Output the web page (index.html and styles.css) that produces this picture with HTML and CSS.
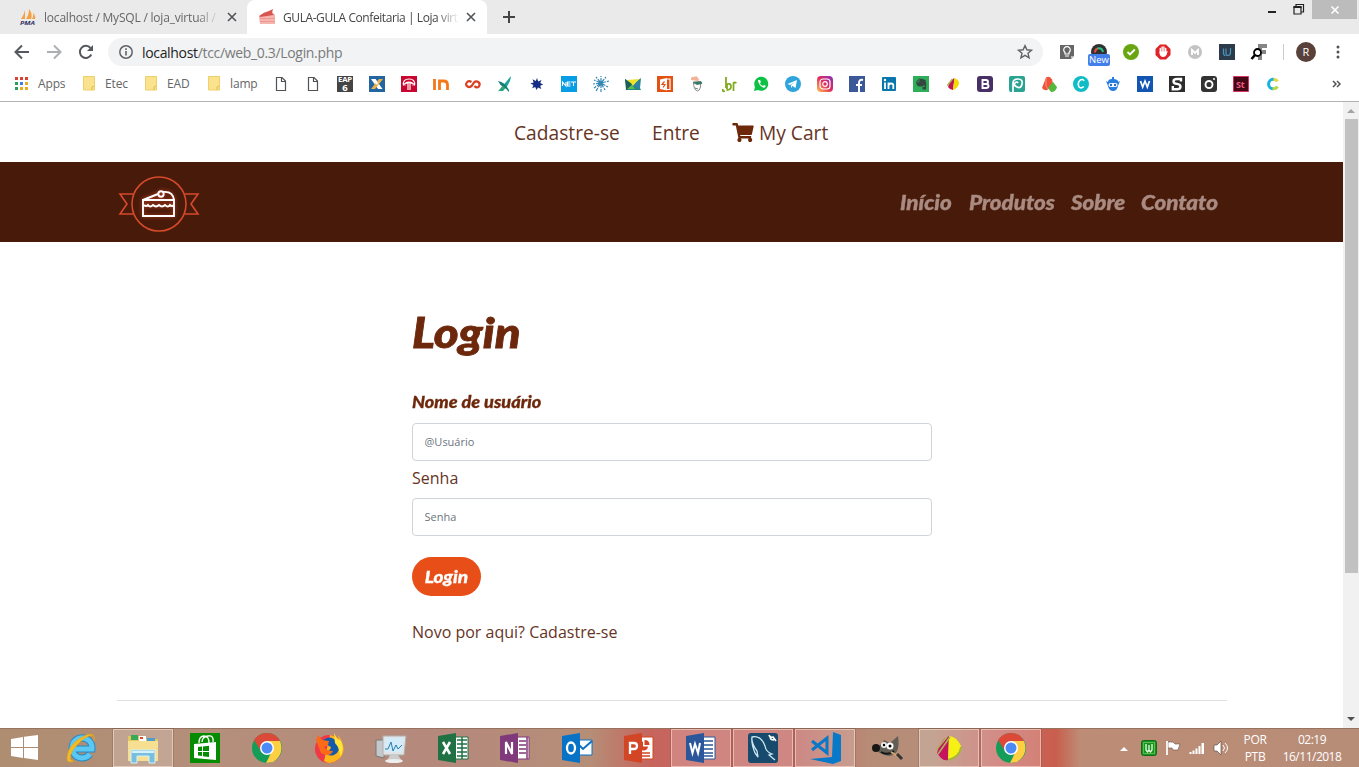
FILE: index.html
```html
<!DOCTYPE html>
<html lang="pt-BR">
<head>
<meta charset="utf-8">
<title>GULA-GULA Confeitaria | Loja virtual</title>
<link rel="stylesheet" href="styles.css">
</head>
<body>
<div class="screen">
  <header class="tabstrip">
    <div class="tab tab-idle">
      <svg class="fav" viewBox="0 0 16 16"><path d="M5 1v9H1Q4 6 5 1zM9 0q4 5 2 10H6Q9 6 9 0zM13 4q3 3 2 6h-3q2-3 1-6z" fill="#f4a043"/><text x="0" y="15.500" class="pma" textLength="15" lengthAdjust="spacingAndGlyphs">PMA</text></svg>
      <span class="tab-title title-one">localhost / MySQL / loja_virtual /</span>
      <svg class="close" viewBox="0 0 10 10"><path d="M1 1l8 8M9 1L1 9"/></svg>
    </div>
    <div class="tab tab-active">
      <svg class="fav" viewBox="0 0 16 16"><path d="M0 8L12 2l4 4v9H1z" fill="#f5b5ae"/><path d="M0 7Q5 3 10 2l4-2-1 4 2 2L1 8z" fill="#d85650"/><path d="M1 9.500h15M1 12.500h15" stroke="#ee9a93"/></svg>
      <span class="tab-title title-two">GULA-GULA Confeitaria | Loja virt</span>
      <svg class="close" viewBox="0 0 10 10"><path d="M1 1l8 8M9 1L1 9"/></svg>
    </div>
    <svg class="newtab" viewBox="0 0 12 12"><path d="M6 0v12M0 6h12"/></svg>
    <div class="winbtns">
      <svg class="min" viewBox="0 0 8 2"><path d="M0 0h8v2H0z" fill="#222"/></svg>
      <svg class="restore" viewBox="0 0 11 11"><path d="M1 3h7v7H1zM3 3V.5h7.5V8H8" fill="none" stroke="#222" stroke-width="1.2"/><path d="M.5 3h8" stroke="#222" stroke-width="2"/></svg>
      <div class="winclose"><svg viewBox="0 0 8 8"><path d="M.5.5l7 7m0-7l-7 7" stroke="#fff" stroke-width="1.6"/></svg></div>
    </div>
  </header>

  <div class="toolbar">
    <svg class="nav-ic" viewBox="0 0 16 16"><path d="M15 8H2M8 1.500L1.500 8 8 14.500" class="ln"/></svg>
    <svg class="nav-ic dim" viewBox="0 0 16 16"><path d="M1 8h13M8 1.500L14.500 8 8 14.500" class="ln"/></svg>
    <svg class="nav-ic" viewBox="0 0 16 16"><path d="M13.300 10.500A6 6 0 1 1 12.500 4" class="ln"/><path d="M15 1v6H9z" fill="#55585c"/></svg>
    <div class="omnibox">
      <svg class="info" viewBox="0 0 14 14"><circle cx="7" cy="7" r="6.200" fill="none" stroke="#5f6368" stroke-width="1.500"/><path d="M7 6v4.500M7 3.300V5" stroke="#5f6368" stroke-width="1.600"/></svg>
      <span class="url"><b>localhost</b>/tcc/web_0.3/Login.php</span>
      <svg class="star" viewBox="0 0 16 16"><path d="M8 1.600l1.900 4.200 4.600.4-3.500 3.100 1.100 4.500L8 11.400l-4.100 2.400L5 9.300 1.500 6.200l4.600-.4z" fill="none" stroke="#5f6368" stroke-width="1.400"/></svg>
    </div>
    <div class="exts">
      <svg viewBox="0 0 16 16"><path d="M1 1h14v11l-3 3H1z" fill="#666"/><path d="M15 12l-3 3v-3z" fill="#bbb"/><path d="M6 10V8.500a3.300 3.300 0 1 1 4 0V10zM6 12h4" fill="none" stroke="#fff" stroke-width="1.200"/></svg>
      <div class="new-ext"><svg viewBox="0 0 16 16"><circle cx="8" cy="8" r="8" fill="#2f3133"/><path d="M4 8.500Q4 5 7 4.500" fill="none" stroke="#e64c3c" stroke-width="2"/><path d="M6.500 4.500Q11 3.500 12 8" fill="none" stroke="#27c486" stroke-width="2"/></svg><span>New</span></div>
      <svg viewBox="0 0 16 16"><circle cx="8" cy="8" r="8" fill="#68a611"/><path d="M4.500 8L7 10.500l4.800-5" fill="none" stroke="#fff" stroke-width="1.900"/></svg>
      <svg viewBox="0 0 16 16"><path d="M5 .500h6L15.500 5v6L11 15.500H5L.500 11V5z" fill="#df2329"/><path d="M5.300 9V4.500M7.100 8V3M8.900 8V3M10.700 9V4.500" stroke="#fff" stroke-width="1.400" stroke-linecap="round"/><path d="M4.600 7.500h6.800l1.400-.8-1.300 4.300q-1 2-3.500 2t-3.400-3z" fill="#fff"/></svg>
      <svg viewBox="0 0 16 16"><circle cx="8" cy="8" r="7" fill="#c3c3c3"/><path d="M5 11V6l3 3 3-3v5" fill="none" stroke="#fff" stroke-width="1.800"/></svg>
      <svg viewBox="0 0 16 16"><path d="M0 0h16v16H0z" fill="#2b3b4c"/><path d="M4.500 4.500v4.500q0 2.500 2 2.500M7 4.500V9q0 2.500 2 2.500 2.500 0 2.500-3V4" fill="none" stroke="#4d94b8" stroke-width="1.200"/></svg>
      <svg viewBox="0 0 16 16"><path d="M7 0h9v4h-5v2h4v4h-4v6H7z" fill="#858585"/><circle cx="6.500" cy="8.500" r="3.500" fill="#fff" stroke="#000" stroke-width="1.800"/><path d="M4 11l-3.500 4" stroke="#000" stroke-width="2.600"/></svg>
    </div>
    <i class="tool-sep"></i>
    <span class="avatar">R</span>
    <svg class="dots" viewBox="0 0 4 14"><circle cx="2" cy="2" r="1.500"/><circle cx="2" cy="7" r="1.500"/><circle cx="2" cy="12" r="1.500"/></svg>
  </div>

  <nav class="bookmarks">
    <svg class="apps" viewBox="0 0 13 13"><path d="M0 0h3v3H0zM5 0h3v3H5zM10 0h3v3h-3z" fill="#d84335"/><path d="M0 5h3v3H0z" fill="#2a9d58"/><path d="M5 5h3v3H5z" fill="#3b7de8"/><path d="M10 5h3v3h-3zM5 10h3v3H5zM10 10h3v3h-3z" fill="#e5ad22"/><path d="M0 10h3v3H0z" fill="#2a9d58"/></svg>
    <span class="bm w-apps">Apps</span>
    <svg class="folder" viewBox="0 0 12 15"><path d="M.500.500h11V14H.500z" fill="#fbe38e" stroke="#edcf6d"/><path d="M9 14v-3l2-1" fill="none" stroke="#dfbb4d"/></svg>
    <span class="bm w-etec">Etec</span>
    <svg class="folder" viewBox="0 0 12 15"><path d="M.500.500h11V14H.500z" fill="#fbe38e" stroke="#edcf6d"/><path d="M9 14v-3l2-1" fill="none" stroke="#dfbb4d"/></svg>
    <span class="bm w-ead">EAD</span>
    <svg class="folder" viewBox="0 0 12 15"><path d="M.500.500h11V14H.500z" fill="#fbe38e" stroke="#edcf6d"/><path d="M9 14v-3l2-1" fill="none" stroke="#dfbb4d"/></svg>
    <span class="bm w-lamp">lamp</span>
    <div class="bm-icons">
      <svg viewBox="0 0 16 16"><path d="M3.500 1.500H9L12.500 5v9.500h-9zM8.500 1.500v4h4" fill="none" stroke="#505356" stroke-width="1.200"/></svg>
      <svg viewBox="0 0 16 16"><path d="M3.500 1.500H9L12.500 5v9.500h-9zM8.500 1.500v4h4" fill="none" stroke="#505356" stroke-width="1.200"/></svg>
      <svg viewBox="0 0 16 16"><path d="M0 0h16v16H0z" fill="#444"/><text x="1" y="6" class="t-eap" textLength="14" lengthAdjust="spacingAndGlyphs">EAP</text><text x="5.200" y="14.500" class="t-six">6</text></svg>
      <svg viewBox="0 0 16 16"><path d="M0 0h16v16H0z" fill="#2365a0"/><path d="M2 3h4.500l7 10H9z" fill="#fff"/><path d="M10 3h4L6 13H2z" fill="#edb04a"/><path d="M6 3l3 4-1 2-5-6z" fill="#fff"/></svg>
      <svg viewBox="0 0 16 16"><path d="M0 0h16v16H0z" fill="#c9062f"/><path d="M2.500 9.500Q1.500 3 8 3t5.500 6.500M4 9.500q-.500-3.500 4-3.500t4 3.500M3 8q5-2 10 0M7 7v7M9 7v7" fill="none" stroke="#fff" stroke-width="1.200"/></svg>
      <svg viewBox="0 0 16 16"><path d="M1.500 3v11M6.500 14V5h4q4 0 4 4v5" fill="none" stroke="#f27818" stroke-width="2.800"/></svg>
      <svg viewBox="0 0 16 16"><path d="M6.500 6Q3.500 4 1.800 6.500t.700 4q2.500 1.500 4.500-1l2-3q2-2 4.300-.500t.700 4.500q-2.500 2-4.500-.500" fill="none" stroke="#dd3e20" stroke-width="2.200"/></svg>
      <svg viewBox="0 0 16 16"><path d="M14 0Q14 7 6 15H1.500Q8 7 14 0z" fill="#1ca49c"/><path d="M1 5q7 1 11 9v2Q9 12 6 11 3 9 1 5z" fill="#13807a"/><path d="M1 15.500l5-6 2 3z" fill="#35a56b"/></svg>
      <svg viewBox="0 0 16 16"><path d="M8 2l1.200 3.500L12.500 4l-1.300 3 3 1.500-3 1.300 1 3.200-3.200-1.500L7.500 14l-1.300-3-3 1.300 1.200-3.300-3-1.500 3.200-1-1-3.300L6.800 5z" fill="#152e83"/></svg>
      <svg viewBox="0 0 16 16"><path d="M0 0h16v16H0z" fill="#079de5"/><path d="M1.500 10V6L5 10V6M9.500 6h-3v4h3M6.500 8h3M10 6h5M12.500 6v4" fill="none" stroke="#fff" stroke-width="1.100"/></svg>
      <svg viewBox="0 0 16 16"><path d="M8 7L3 1M8 7V0M8 7l5-6M8 7l8-2M8 7L1 4M8 7L0 8M8 7l-7 5M8 7l-5 8M8 7v9M8 7l4 7M8 7l7 4" stroke="#3487b4" stroke-width="1.200" stroke-dasharray="5 1"/></svg>
      <svg viewBox="0 0 16 16"><path d="M0 3l8 5 8-6-1 10 1 2H2z" fill="#26877e"/><path d="M2 4l12-1-6 7z" fill="#f0e229"/><path d="M0 3l7 5-5 6H1z" fill="#1b6055"/><path d="M8 10l6-6 1 9z" fill="#2e83ad"/><path d="M2 13l5-4 3 4z" fill="#58bb56"/></svg>
      <svg viewBox="0 0 16 16"><path d="M0 0h16v16H0z" fill="#e35212"/><path d="M3 3.500L10 2v12.500L3 13z" fill="#fff"/><path d="M10 3h3v10.500h-3" fill="none" stroke="#fff" stroke-width="1.200"/><path d="M7.500 5.500L5 8.500h3L6 11.500" fill="none" stroke="#e35212" stroke-width="1.200"/></svg>
      <svg viewBox="0 0 16 16"><path d="M2 4Q2 0 5 1q3-2 4 1 2 2 0 3z" fill="#f2b399"/><path d="M4.500 6h7v5q-1 4-3 4-4-1-4-9z" fill="#fff" stroke="#857a70" stroke-width=".9"/><path d="M4 6.500l8-1 1 2-5 1zM6 12l3 1" fill="#397769" stroke="#397769" stroke-width=".8"/></svg>
      <svg viewBox="0 0 16 16"><path d="M5 1v11M2 13q-1 3 2 2M6 13V8q4-1 4 2.500T5.500 14M12.500 15V7q1-1 3 0" fill="none" stroke="#82ab21" stroke-width="1.800"/></svg>
      <svg viewBox="0 0 16 16"><path d="M1 15l1-4A7 7 0 1 1 5 14z" fill="#0cc143"/><path d="M5 4q0 5 6 8l2-2-2-1-1 1q-3-1-3-3l1-1-1-2z" fill="#fff"/></svg>
      <svg viewBox="0 0 16 16"><circle cx="8" cy="8" r="8" fill="#2fa4dc"/><path d="M2.500 8L12 4l-1.500 8-3-2-1.500 2V9l4-3-5 3z" fill="#fff"/></svg>
      <svg viewBox="0 0 16 16"><defs><linearGradient id="insta" x2="1" y2="0" y1="1"><stop stop-color="#ffc64d"/><stop offset=".5" stop-color="#e32b5d"/><stop offset="1" stop-color="#8530c4"/></linearGradient></defs><rect width="16" height="16" rx="4" fill="url(#insta)"/><rect x="3" y="3" width="10" height="10" rx="3" fill="none" stroke="#fff" stroke-width="1.200"/><circle cx="8" cy="8" r="2.300" fill="none" stroke="#fff" stroke-width="1.200"/></svg>
      <svg viewBox="0 0 16 16"><path d="M0 0h16v16H0z" fill="#3b5999"/><path d="M14 4q-4-1-4 3v9M7 9h6" fill="none" stroke="#fff" stroke-width="2"/></svg>
      <svg viewBox="0 0 16 16"><rect x="1" y="1" width="14" height="14" rx="1" fill="#0877ae"/><path d="M4 6.500V13M7.500 6.500V13M7.500 10q0-2.500 2.500-2.500t2.300 2V13" fill="none" stroke="#fff" stroke-width="1.800"/><circle cx="4" cy="4" r="1.200" fill="#fff"/></svg>
      <svg viewBox="0 0 16 16"><path d="M0 0h16v16H0z" fill="#2dae59"/><path d="M3 6l3-3.500q4 0 6.500 1.500Q14 8 13 13.500H9.500V11h2V9q-2 2-4 1.500Q3.500 11 3 6z" fill="#354640"/><path d="M3.500 6H6V3" fill="none" stroke="#2dae59" stroke-width=".7"/></svg>
      <svg viewBox="0 0 16 16"><path d="M3 11Q5 4 9.500 2L8 14q-3 0-5-3z" fill="#bd1754"/><path d="M9.500 2q5 2 4.500 6-2 5-6 6z" fill="#f4dc00"/><path d="M2.300 9.500L7.500 3" stroke="#a9b755" stroke-width="1.500"/></svg>
      <svg viewBox="0 0 16 16"><rect width="16" height="16" rx="3" fill="#483067"/><path d="M5.500 4h3.300q2.200 0 2.200 2T8.800 8q2.700 0 2.700 2T9 12H5.500zM5.500 8h3.300" fill="none" stroke="#fff" stroke-width="1.900"/></svg>
      <svg viewBox="0 0 16 16"><rect width="16" height="16" rx="2" fill="#2aa392"/><path d="M4 16V7q0-4 5-4t4 5-5 3-2-4 3 0" fill="none" stroke="#fff" stroke-width="1.700"/></svg>
      <svg viewBox="0 0 16 16"><path d="M1 12L5 1.500q4-2 6 2l1 4-5 6q-3 2-6-1.500z" fill="#ee543a"/><path d="M7 12l5-6 4 5q-1 5-6 5z" fill="#56b73e"/><path d="M5 2v8l2 3" fill="none" stroke="#ff9078"/></svg>
      <svg viewBox="0 0 16 16"><circle cx="8" cy="8" r="8" fill="#10bdc6"/><path d="M11 5q-1-2.500-3.700-1Q4 7 6 11q2 2 4.800-.500" fill="none" stroke="#fff" stroke-width="1.600"/></svg>
      <svg viewBox="0 0 16 16"><path d="M7 3V1h2v2q5 1 4 3l2-1-2 5q-1 5-5 5t-5-5L1 5l2 1q0-3 4-3z" fill="#287de1"/><rect x="3.500" y="7" width="9" height="4" rx="2" fill="#fff"/><circle cx="6" cy="9" r="1.200" fill="#246bd0"/><circle cx="10" cy="9" r="1.200" fill="#246bd0"/></svg>
      <svg viewBox="0 0 16 16"><path d="M0 0h16v16H0z" fill="#1255b2"/><path d="M3.500 5L5.700 11 8 5l2.300 6 2.200-6" fill="none" stroke="#fff" stroke-width="1.700"/></svg>
      <svg viewBox="0 0 16 16"><path d="M0 0h16v16H0z" fill="#2d2d2d"/><path d="M12 5.500V3H8Q4.500 3 4.500 5.300t3.500 2.600 3.500 2.800-3.500 2.500H3.800V10" fill="none" stroke="#fff" stroke-width="2.400"/></svg>
      <svg viewBox="0 0 16 16"><rect width="16" height="16" rx="3" fill="#333"/><circle cx="8" cy="8.500" r="3.500" fill="none" stroke="#fff" stroke-width="1.900"/><circle cx="13" cy="3" r="1" fill="#fff"/></svg>
      <svg viewBox="0 0 16 16"><path d="M.500.500h15v15H.500z" fill="#440817" stroke="#db315f"/><text x="3" y="11.500" class="t-st">St</text></svg>
      <svg viewBox="0 0 16 16"><path d="M12.500 5.500Q11 3.300 8 3.300" fill="none" stroke="#e3da43" stroke-width="3"/><path d="M8.500 3.300a4.700 4.700 0 0 0-.500 9.400" fill="none" stroke="#17b2df" stroke-width="3"/><path d="M7.500 12.700q3.500.300 5-2.200" fill="none" stroke="#b5d943" stroke-width="3"/></svg>
    </div>
    <svg class="more" viewBox="0 0 9 8"><path d="M1 1l3 3-3 3M5 1l3 3-3 3" fill="none" stroke="#555" stroke-width="1.500"/></svg>
  </nav>

  <main class="viewport">
    <div class="site">
      <div class="topnav">
        <a class="t-cad">Cadastre-se</a><a class="t-ent">Entre</a>
        <a class="cart"><svg viewBox="0 0 576 512"><path fill="#6d280c" d="M528.100 301.300l47.300-208C578.800 78.300 567.400 64 552 64H159.200l-9.200-44.800C147.800 8 137.900 0 126.500 0H24C10.700 0 0 10.700 0 24v16c0 13.300 10.700 24 24 24h69.900l70.200 343.400C147.300 417.100 136 435.200 136 456c0 30.900 25.100 56 56 56s56-25.100 56-56c0-15.700-6.400-29.800-16.800-40h209.600C430.400 426.200 424 440.300 424 456c0 30.900 25.100 56 56 56s56-25.100 56-56c0-22.200-12.900-41.300-31.600-50.400l5.500-24.300c3.400-15-8-29.300-23.400-29.300H218.100l-6.500-32h293.100c11.200 0 20.900-7.800 23.400-18.700z"/></svg><span>My Cart</span></a>
      </div>
      <div class="brandbar">
        <svg class="logo" viewBox="0 0 82 58"><g fill="none" stroke="#d64a2b" stroke-width="1.600"><circle cx="41" cy="29" r="27"/><path d="M15 19H2l7 10-7 10h13M67 19h13l-7 10 7 10H67"/></g><g class="cake" fill="none" stroke="#fff" stroke-width="1.900"><path d="M25 41V25h31v16zM25 25l15-6M45 17q10-1 11 8M26 30q2 2 4 0 2 3 5 0 3 3 6 0 3 3 6 0 3 3 5 0 2 2 4 0"/><circle cx="43" cy="19" r="2.700"/></g></svg>
        <nav class="menu"><a class="m1"><span>Início</span></a><a class="m2"><span>Produtos</span></a><a class="m3"><span>Sobre</span></a><a class="m4"><span>Contato</span></a></nav>
      </div>
      <form class="login">
        <h1>Login</h1>
        <label class="user">Nome de usuário</label>
        <input type="text" placeholder="@Usuário">
        <label class="pass">Senha</label>
        <input type="password" placeholder="Senha">
        <button type="button"><span>Login</span></button>
        <p>Novo por aqui? Cadastre-se</p>
      </form>
      <hr>
    </div>
    <div class="scrollbar"><svg viewBox="0 0 8 4"><path d="M0 4l4-4 4 4z" fill="#a3a3a3"/></svg><i></i><svg class="down" viewBox="0 0 8 4"><path d="M0 0l4 4 4-4z" fill="#505050"/></svg></div>
  </main>

  <footer class="taskbar">
    <div class="start"><svg viewBox="0 0 28 28"><path d="M0 5l12-2v10H0zM13 2.800L27 1v12H13zM0 14h12v10L0 22zM13 14h14v12l-14-2z" fill="#fff"/></svg></div>
    <div class="tasks">
      <div class="task"><svg viewBox="0 0 32 32"><path d="M25 22A10 10 0 1 1 27 17H9" fill="none" stroke="#278ac5" stroke-width="7"/><path d="M25 22A10 10 0 1 1 27 17H9" fill="none" stroke="#5bc8f4" stroke-width="5"/><path d="M29 9Q31 0 21 3 3 11 2 26q0 6 7 3Q2 29 8 18 16 7 24 4q6-2 5 5z" fill="#f2bb23" stroke="#e3a51a" stroke-width=".6"/></svg></div>
      <div class="task open"><svg viewBox="0 0 32 32"><path d="M1 4h12l2 3h16v22H1z" fill="#e6c65f"/><path d="M4 3h7v5H4z" fill="#37a957"/><path d="M12 4h7v5h-7z" fill="#fff"/><path d="M13 5h3v2h-3z" fill="#dc4930"/><path d="M20 6h8v3h-8z" fill="#4e9dd1"/><path d="M1 9h30v20H1z" fill="#f6df91"/><path d="M4 31V18h24v13h-6v-7H10v7z" fill="#78bedf" stroke="#d5f2fb"/><path d="M5 20h22" stroke="#d5f2fb" stroke-width="2"/></svg></div>
      <div class="task"><svg viewBox="0 0 32 32"><path d="M1 1h30v30H1z" fill="#058b00"/><path d="M5 12l22-2v18L5 26z" fill="#fff"/><path d="M10 11q0-7 5-7t5 7M13 10q0-5 6-6t5 6" fill="none" stroke="#fff" stroke-width="1.300"/><path d="M9 15l4-.500V19H9zM14 14.400l6-.700V19h-6zM9 20h4v4l-4-.500zM14 20h6v5l-6-.800z" fill="#058b00"/></svg></div>
      <div class="task"><svg viewBox="0 0 32 32"><circle cx="16" cy="16" r="15" fill="#149d59"/><path d="M3 8Q8 1 16 1q9 0 13 8H16l-6 10z" fill="#dc4938"/><path d="M16 9h13q5 13-7 21l-7 1 6-12z" fill="#ffcf42"/><circle cx="16" cy="16" r="7" fill="#fff"/><circle cx="16" cy="16" r="5.500" fill="#4c8bf5"/></svg></div>
      <div class="task"><svg viewBox="0 0 32 32"><circle cx="16" cy="17" r="14" fill="#ef3947"/><path d="M17 3q6 1 9 6l-1-6q10 14 2 23-9 8-16 3z" fill="#ffb51b"/><path d="M10 8q8-6 14 2 5 9-3 13-7 2-9-4 5 1 6-4-3-1-5-4z" fill="#135baa"/><path d="M3 8l2-5 4 5 7 1-1 4-4 2q2 4 9 4-3 7-12 2z" fill="#fa6b18"/><path d="M21 1q2 5 7 8 4 8-1 16 0-9-5-14z" fill="#ffe43a"/></svg></div>
      <div class="task"><svg viewBox="0 0 32 32"><path d="M1 8h8v18l-8-2z" fill="#c4c8ca" stroke="#777"/><path d="M8 4h23l-2 19H8z" fill="#e2e3e4" stroke="#adb0b2"/><path d="M10 6h18l-1 14H10z" fill="#d4ecfa"/><path d="M10 17h3l3-7 2 9 3-6 2 4 4-4" fill="none" stroke="#267faa"/><path d="M15 23h8l4 6H12z" fill="#ccc"/><ellipse cx="19" cy="29" rx="9" ry="2" fill="#eee"/></svg></div>
      <div class="task"><svg viewBox="0 0 32 32"><path d="M18 5h13v22H18z" fill="#fff" stroke="#207245"/><path d="M20 8h10M20 12h10M20 16h10M20 20h10M20 24h10M25 5v22" stroke="#207245" stroke-width="1.500"/><path d="M1 4l18-3v30L1 28z" fill="#207245"/><path d="M6 10l7 12m0-12L6 22" stroke="#fff" stroke-width="2.500"/></svg></div>
      <div class="task"><svg viewBox="0 0 32 32"><path d="M18 5h12v22H18z" fill="#fff" stroke="#80397b"/><path d="M20 9h7M20 13h7M20 17h7M20 21h7M28 5v22" stroke="#80397b" stroke-width="1.500"/><path d="M1 4l18-3v30L1 28z" fill="#80397b"/><path d="M7 22V10l6 12V10" fill="none" stroke="#fff" stroke-width="2.200"/></svg></div>
      <div class="task"><svg viewBox="0 0 32 32"><path d="M17 8h14v15H17z" fill="#fff" stroke="#0872c6"/><path d="M18 13l4 4 9-8" fill="none" stroke="#0872c6" stroke-width="2"/><path d="M1 4l18-3v30L1 28z" fill="#0872c6"/><ellipse cx="10" cy="16" rx="4" ry="5.500" fill="none" stroke="#fff" stroke-width="2.300"/></svg></div>
      <div class="task"><svg viewBox="0 0 32 32"><path d="M18 5h12v22H18z" fill="#fff" stroke="#d24625"/><path d="M19 21h8M19 24h8" stroke="#d24625" stroke-width="1.500"/><path d="M20 9.500a4.500 4.500 0 1 0 5 5h-5z" fill="#d24625"/><path d="M21.500 8q5 0 5 5h-5z" fill="#d24625"/><path d="M1 4l18-3v30L1 28z" fill="#d24625"/><path d="M7 22V11h4q3 0 3 3t-3 3H7" fill="none" stroke="#fff" stroke-width="2.300"/></svg></div>
      <div class="task open"><svg viewBox="0 0 32 32"><path d="M18 5h12v22H18z" fill="#fff" stroke="#2b579a"/><path d="M19 9h9M19 13h9M19 17h9M19 21h9M19 24h9" stroke="#2b579a" stroke-width="1.300"/><path d="M1 4l18-3v30L1 28z" fill="#2b579a"/><path d="M5 11l2.500 10L10 12l3 9 2-10" fill="none" stroke="#fff" stroke-width="2"/></svg></div>
      <div class="task open"><svg viewBox="0 0 32 32"><rect x="1" y="1" width="30" height="30" rx="3" fill="#174a6c"/><path d="M8 21l3 4-1-6Q4 11 5 5q9-2 13 9 1 6 7 8l-3 1 6 5M8 21Q4 11 5 5" fill="none" stroke="#cde8f3" stroke-width="1.300"/><path d="M22 3q1 3 4 2l3 4M23 4q0 4 4 4" stroke="#fff" stroke-width="1.700" fill="none"/></svg></div>
      <div class="task open"><svg viewBox="0 0 32 32"><path d="M24 0l8 3v26l-8 3L1 27l22-2z" fill="#0878c8"/><path d="M3 9l15 12V6L3 18" fill="none" stroke="#0878c8" stroke-width="3"/></svg></div>
      <div class="task"><svg viewBox="0 0 32 32"><path d="M3 14q9 0 10-6l6 3 8-7q3 19-9 20-12-2-15-10z" fill="#625f56"/><circle cx="5" cy="16" r="4" fill="#171715"/><circle cx="13" cy="13" r="3" fill="#eee"/><circle cx="19" cy="14" r="3.500" fill="#fff"/><circle cx="13" cy="13" r="1.200"/><circle cx="19" cy="14" r="1.500"/><path d="M10 20q7 4 13-1" fill="none" stroke="#161616" stroke-width="2"/><path d="M20 20l8 5" stroke="#d1a471" stroke-width="2"/><path d="M26 22l5 5" stroke="#333" stroke-width="3"/></svg></div>
      <div class="task open"><svg viewBox="0 0 32 32"><path d="M4 21Q7 8 16 4l-1 24q-4 1-7-2z" fill="#c5135e"/><path d="M16 4q7 0 12 10 0 8-13 14z" fill="#f6f015"/><path d="M3 18L14 5M5 22L17 5" stroke="#acb25c" stroke-width="1.600"/><path d="M28 15q-1 10-13 13" fill="none" stroke="#a5b830" stroke-width="2"/></svg></div>
      <div class="task open"><svg viewBox="0 0 32 32"><circle cx="16" cy="16" r="15" fill="#149d59"/><path d="M3 8Q8 1 16 1q9 0 13 8H16l-6 10z" fill="#dc4938"/><path d="M16 9h13q5 13-7 21l-7 1 6-12z" fill="#ffcf42"/><circle cx="16" cy="16" r="7" fill="#fff"/><circle cx="16" cy="16" r="5.500" fill="#4c8bf5"/></svg></div>
    </div>
    <div class="tray">
      <svg class="caret" viewBox="0 0 8 5"><path d="M0 5l4-4 4 4z" fill="#fff"/></svg>
      <svg class="wamp" viewBox="0 0 16 16"><rect x=".5" y=".5" width="15" height="15" rx="2" fill="#159321" stroke="#116d16"/><path d="M2.500 2.500h11v11h-11z" fill="none" stroke="#7fca6d" stroke-width=".7"/><path d="M5 4v6l1.500 2L8 10l1.500 2L11 10V4M8 5v5" fill="none" stroke="#eaffdf" stroke-width="1.300"/></svg>
      <svg class="flag" viewBox="0 0 16 16"><path d="M3 2h5l2 2h5l-2 6H8L7 8H3z" fill="#fff" stroke="#654f49" stroke-width=".6"/><path d="M2 1v14" stroke="#fff" stroke-width="1.700"/></svg>
      <svg class="signal" viewBox="0 0 16 16"><path d="M.500 12h2v2h-2zM3.500 10.500h2V14h-2zM6.500 8.500h2V14h-2zM9.500 6h2v8h-2zM12.500 3h2.500v11h-2.500z" fill="#fff"/></svg>
      <svg class="sound" viewBox="0 0 16 16"><path d="M1 5h3l4-4v14l-4-4H1z" fill="#fff" stroke="#66534b" stroke-width=".7"/><path d="M10 5q3 3 0 6M12 3q5 5 0 10" fill="none" stroke="#fff"/></svg>
      <div class="lang">POR<br>PTB</div>
      <div class="clock"><span>02:19</span><br>16/11/2018</div>
    </div>
  </footer>
</div>
</body>
</html>
```
FILE: styles.css
```css
* { box-sizing: border-box; }
body { margin: 0; font-family: "Open Sans", sans-serif; overflow: hidden; }
svg { display: block; flex: none; overflow: visible; }
.screen { width: 1359px; height: 767px; display: flex; flex-direction: column; background: #fff; }

/* Browser window */
.tabstrip { height: 34px; flex: none; background: #eaeaea; display: flex; align-items: center; }
.tab { height: 34px; display: flex; align-items: center; white-space: nowrap; font-size: 12px; color: #666; }
.tab-idle { width: 247px; padding-left: 20px; }
.tab-active { width: 240px; padding-left: 12px; background: #fff; border-radius: 8px 8px 0 0; }
.fav { width: 16px; height: 16px; }
.tab-title { margin-left: 8px; width: 176px; overflow: hidden; -webkit-mask-image: linear-gradient(90deg, #000 87%, transparent); mask-image: linear-gradient(90deg, #000 87%, transparent); }
.title-one { letter-spacing: -.2px; }
.title-two { letter-spacing: -.42px; color: #444; }
.close { width: 10px; height: 10px; margin-left: 7px; stroke: #505357; stroke-width: 1.6; }
.newtab { width: 12px; height: 12px; margin-left: 16px; stroke: #444; stroke-width: 2; }
.winbtns { height: 34px; margin-left: auto; display: flex; padding-right: 2px; }
.min { width: 8px; height: 2px; margin: 11px 17px 0 0; }
.restore { width: 11px; height: 11px; margin: 4px 8px 0 0; }
.winclose { width: 45px; height: 19px; background: #bcbcbc; display: grid; place-items: center; }
.winclose svg { width: 8px; height: 8px; }
.toolbar { height: 35px; flex: none; display: flex; align-items: center; padding: 1px 0 0 14px; }
.nav-ic { width: 16px; height: 16px; margin-right: 16px; }
.ln { fill: none; stroke: #55585c; stroke-width: 2; }
.dim { opacity: .48; }
.omnibox { width: 935px; height: 28px; margin-left: -2px; background: #f1f3f4; border-radius: 14px; display: flex; align-items: center; padding: 0 10px 0 11px; }
.info { width: 14px; height: 14px; }
.url { margin-left: 9px; font-size: 14px; letter-spacing: -.33px; color: #7a7a7a; white-space: nowrap; }
.url b { font-weight: 400; color: #222; }
.star { width: 16px; height: 16px; margin-left: auto; }
.exts { display: flex; gap: 16px; margin-left: 16px; }
.exts svg { width: 16px; height: 16px; }
.new-ext { position: relative; width: 16px; }
.new-ext span { position: absolute; left: -3px; top: 10px; width: 22px; height: 12px; border-radius: 2px; background: #437feb; color: #fff; font: 9.5px/12px "Open Sans", sans-serif; text-align: center; }
.tool-sep { width: 1px; height: 16px; background: #ccc; margin-left: 16px; }
.avatar { width: 20px; height: 20px; margin-left: 12px; border-radius: 50%; background: #59403a; color: #fff; font-size: 11px; line-height: 20px; text-align: center; }
.dots { width: 4px; height: 14px; margin-left: 20px; fill: #505357; }
.bookmarks { height: 33px; flex: none; border-bottom: 1px solid #b5b2b3; display: flex; align-items: center; padding: 0 0 3px 15px; font-size: 12px; letter-spacing: -.15px; color: #666; }
.apps { width: 13px; height: 13px; }
.folder { width: 12px; height: 15px; }
.bm { margin-left: 10px; white-space: nowrap; }
.w-apps { width: 45px; }
.w-etec { width: 40px; }
.w-ead { width: 41px; }
.w-lamp { width: 43px; }
.bm-icons { display: flex; gap: 16px; }
.bm-icons svg { width: 16px; height: 16px; }
.more { width: 9px; height: 8px; margin-left: 51px; }
.pma { font: italic bold 6px "Open Sans", sans-serif; fill: #343467; }
.t-eap { font: bold 6.5px "Open Sans", sans-serif; fill: #fff; }
.t-six { font: bold 9.5px "Open Sans", sans-serif; fill: #fff; }
.t-st { font: bold 9px "Open Sans", sans-serif; fill: #ee5b80; }

/* Login page */
.viewport { height: 626px; flex: none; display: flex; }
.site { width: 1343px; height: 626px; overflow: hidden; color: #66341f; }
.topnav { height: 60px; padding-left: 514px; display: flex; align-items: center; font-size: 19.2px; white-space: nowrap; }
.t-cad { width: 138px; }
.t-ent { width: 80px; }
.cart { display: flex; align-items: center; gap: 5px; }
.cart svg { width: 22px; height: 19px; }
.brandbar { height: 80px; padding: 0 124px 0 118px; background: #471a0a; display: flex; justify-content: space-between; align-items: center; }
.logo { width: 82px; height: 58px; margin-top: 4px; }
.cake { filter: drop-shadow(0 0 2px #c23d20); }
.menu { display: flex; gap: 16px; font: italic 900 20px/30px Lato, sans-serif; color: #a98b82; -webkit-text-stroke: .4px #a98b82; }
.menu span { display: inline-block; transform: scaleX(1.12); transform-origin: 0 50%; }
.m1 { width: 53px; }
.m2 { width: 86px; }
.m3 { width: 54px; }
.m4 { width: 78px; }
.login { width: 520px; margin-left: 412px; padding-top: 65px; display: flex; flex-direction: column; align-items: flex-start; }
.login h1 { margin: 0; font: italic 900 42px/50px Lato, sans-serif; color: #6d280c; -webkit-text-stroke: .8px #6d280c; transform: scaleX(1.13); transform-origin: 0 50%; }
.user { margin-top: 33px; font: italic 900 17px/24px Lato, sans-serif; color: #6d280c; -webkit-text-stroke: .3px #6d280c; transform: scaleX(1.065); transform-origin: 0 50%; }
.login input { width: 520px; height: 38px; margin-top: 9px; padding: 0 12px 1px 11.5px; border: 1px solid #ced4da; border-radius: 4px; font: 11px "Open Sans", sans-serif; }
.login input::placeholder { color: #6c757d; opacity: 1; }
.pass { margin-top: 5px; font-size: 16px; line-height: 24px; }
.pass + input { margin-top: 8px; }
.login button { width: 69px; height: 39px; margin-top: 21px; padding: 0; border: 0; border-radius: 20px; background: #e84e17; color: #fff; font: italic 900 17px Lato, sans-serif; -webkit-text-stroke: .3px #fff; }
.login button span { display: inline-block; transform: scaleX(1.12); }
.login p { margin: 24px 0 0; font-size: 16px; line-height: 24px; white-space: nowrap; }
.site hr { width: 1110px; height: 1px; margin: 56px 0 0 117px; border: 0; background: #dfdfdf; }
.scrollbar { width: 16px; background: #f1f1f1; display: flex; flex-direction: column; align-items: center; padding: 7px 0; }
.scrollbar svg { width: 8px; height: 4px; }
.scrollbar i { width: 13px; height: 454px; margin-top: 6px; background: #c1c1c1; }
.scrollbar .down { margin-top: auto; }

/* Taskbar */
.taskbar { height: 39px; flex: none; border-top: 1px solid #957360; display: flex; background: linear-gradient(90deg, #ae8d70 0, #b48f7b 220px, #b5897c 450px, #b58e77 590px, #c7655d 650px, #c26965 790px, #b78c76 870px, #b58e79 930px, #c96d68 1000px, #c95e4d 1056px, #bd8c76 1080px, #b78d77 1359px); }
.start { width: 51px; padding: 5px 0 0 11px; }
.start svg { width: 28px; height: 28px; }
.tasks { display: flex; gap: 2px; }
.task { width: 60px; height: 38px; display: grid; place-items: center; }
.task svg { width: 32px; height: 32px; }
.open { background: rgba(255,255,255,.2); border: 1px solid rgba(255,240,225,.5); box-shadow: 0 0 0 1px rgba(105,60,45,.22); }
.tray { margin-left: auto; width: 240px; display: flex; align-items: center; color: #fff; font-size: 12px; line-height: 17px; text-align: center; white-space: nowrap; }
.caret { width: 8px; height: 5px; margin-right: 13px; margin-left: 1px; }
.tray .wamp, .tray .flag, .tray .signal, .tray .sound { width: 16px; height: 16px; margin-right: 8px; }
.lang { width: 26px; margin-left: 5px; letter-spacing: -.3px; }
.clock { width: 60px; margin-left: 14px; letter-spacing: -.5px; }
```
